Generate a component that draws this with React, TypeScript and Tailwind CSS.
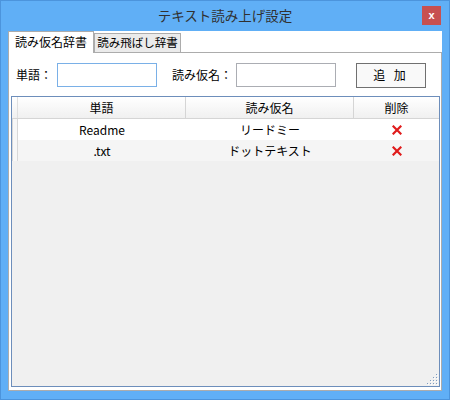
import React from 'react';

const font = { fontFamily: '"Noto Sans CJK JP", "Noto Sans", sans-serif' };

interface Entry {
    word: string;
    reading: string;
}

const entries: Entry[] = [
    { word: 'Readme', reading: 'リードミー' },
    { word: '.txt', reading: 'ドットテキスト' },
];

const DeleteMark = () => (
    <svg width="10" height="10" viewBox="0 0 10 10">
        <path d="M1.5 1.5 L8.5 8.5 M8.5 1.5 L1.5 8.5" stroke="#e01b1b" strokeWidth="2.2" strokeLinecap="square" />
    </svg>
);

const Grip = () => {
    // small dotted triangle in the corner
    const dots: [number, number][] = [];
    for (let r = 0; r < 4; r++) {
        for (let c = 0; c < 4; c++) {
            if (r + c >= 3) dots.push([c * 3, r * 3]);
        }
    }
    return (
        <svg width="12" height="12" viewBox="0 0 12 12">
            {dots.map(([x, y], i) => (
                <g key={i}>
                    <rect x={x + 1} y={y + 1} width="1" height="1" fill="#ffffff" />
                    <rect x={x} y={y} width="1" height="1" fill="#7f9cc0" />
                </g>
            ))}
        </svg>
    );
};

const App = () => {
    return (
        <div className="w-[450px] h-[400px] bg-[#60aff6] border border-[#4c94dc] flex flex-col text-black" style={font}>
            {/* title bar */}
            <div className="h-[30px] relative flex items-center justify-center flex-shrink-0">
                <span className="text-[13.5px] text-[#303030] leading-none">テキスト読み上げ設定</span>
                <div className="absolute left-[421px] top-[5px] w-[19px] h-[19px] bg-[#c75050] flex items-center justify-center">
                    <span className="text-white text-[11px] font-bold leading-none" style={{ fontFamily: '"Liberation Sans", sans-serif' }}>x</span>
                </div>
            </div>

            {/* client area */}
            <div className="flex-1 mx-[7px] mb-[8px] bg-white flex flex-col">
                <div className="h-[21px] flex items-end flex-shrink-0">
                    <div className="w-[86px] h-[22px] bg-white border border-b-0 border-[#acacac] -mb-px relative z-10 flex items-center justify-center text-[12px] leading-none pb-[1px]">
                        読み仮名辞書
                    </div>
                    <div className="w-[87px] h-[19px] bg-[#ebebeb] border border-b-0 border-[#acacac] flex items-center justify-center text-[11.5px] leading-none whitespace-nowrap">
                        読み飛ばし辞書
                    </div>
                </div>

                <div className="flex-1 border border-[#acacac] bg-white flex flex-col">
                    <div className="mt-[10px] h-[24px] flex items-center pl-[7px] text-[12px]">
                        <span className="w-[41px]">単語：</span>
                        <div className="w-[100px] h-[24px] border border-[#7ab0e7] bg-white" />
                        <span className="ml-[15px] w-[64px] whitespace-nowrap">読み仮名：</span>
                        <div className="w-[100px] h-[24px] border border-[#abadb3] bg-white" />
                        <div className="ml-[20px] w-[70px] h-[25px] border border-[#707070] bg-[#f9f9f9] flex items-center justify-center tracking-[3px]">
                            追 加
                        </div>
                    </div>

                    <div className="mt-[9px] ml-[2px] mr-[1px] mb-[3px] flex-1 border border-[#6d8ebb] bg-[#f0f0f0] relative text-[12px]">
                        <div className="h-[22px] flex bg-gradient-to-b from-white to-[#f0f0f0] border-b border-[#d5d5d5]">
                            <div className="w-[6px] border-r border-[#e0e0e0]" />
                            <div className="w-[168px] border-r border-[#d5d5d5] flex items-center justify-center">単語</div>
                            <div className="w-[168px] border-r border-[#d5d5d5] flex items-center justify-center">読み仮名</div>
                            <div className="w-[85px] flex items-center justify-center">削除</div>
                        </div>
                        {entries.map((entry, i) => (
                            <div key={entry.word} className={`h-[21px] flex ${i % 2 === 0 ? 'bg-white' : 'bg-[#f5f5f5]'}`}>
                                <div className="w-[6px] border-x border-[#d8d8d8] bg-[#f7f7f7]" />
                                <div className="w-[168px] flex items-center justify-center">{entry.word}</div>
                                <div className="w-[168px] flex items-center justify-center">{entry.reading}</div>
                                <div className="w-[85px] flex items-center justify-center">
                                    <DeleteMark />
                                </div>
                            </div>
                        ))}
                        <div className="absolute right-0 bottom-0">
                            <Grip />
                        </div>
                    </div>
                </div>
            </div>
        </div>
    );
};

export default App;
